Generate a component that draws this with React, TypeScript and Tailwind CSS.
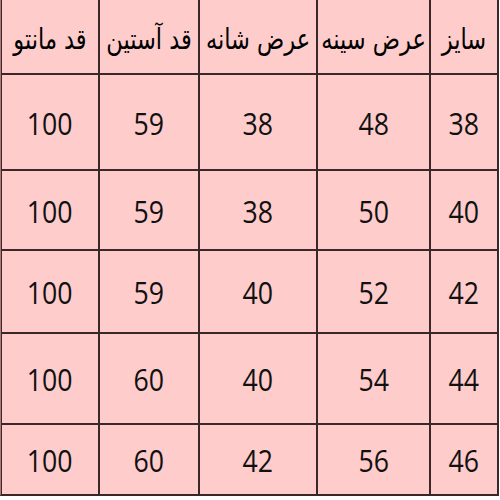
import React from "react";

const headers = ["سایز", "عرض سینه", "عرض شانه", "قد آستین", "قد مانتو"];
const rows = [
  ["38", "48", "38", "59", "100"],
  ["40", "50", "38", "59", "100"],
  ["42", "52", "40", "59", "100"],
  ["44", "54", "40", "60", "100"],
  ["46", "56", "42", "60", "100"],
];

export default function App() {
  return (
    <div className="w-[500px] h-[500px] bg-white">
      <div
        dir="rtl"
        className="w-[499px] h-[496px] grid grid-cols-[66px_111px_116px_98px_96px] grid-rows-[73px_94px_78px_81px_89px_69px] gap-[2px] bg-[#3a2828] border-l border-l-[#b07a7a] border-r-2 border-r-[#3a2828] border-b-2 border-b-[#3a2828]"
      >
        {headers.map((h) => (
          <div
            key={h}
            className="bg-[#ffcccc] flex items-center justify-center text-[25px] text-black whitespace-nowrap pt-[6px]"
            style={{ fontFamily: '"DejaVu Sans Condensed", "DejaVu Sans", sans-serif' }}
          >
            <span className="inline-block scale-y-[1.15]">{h}</span>
          </div>
        ))}
        {rows.map((r, i) =>
          r.map((c, j) => (
            <div
              key={`${i}-${j}`}
              className="bg-[#ffcccc] flex items-center justify-center text-[31px] text-[#111] pt-[2px]"
              style={{ fontFamily: '"Open Sans", sans-serif' }}
            >
              <span className="inline-block scale-x-[0.86]">{c}</span>
            </div>
          ))
        )}
      </div>
    </div>
  );
}
